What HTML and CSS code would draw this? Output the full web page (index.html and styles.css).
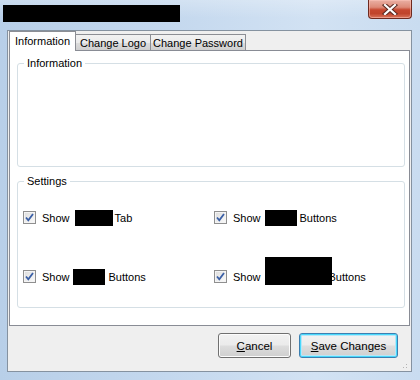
FILE: index.html
```html
<!DOCTYPE html>
<html>
<head>
<meta charset="utf-8">
<link rel="stylesheet" href="styles.css">
</head>
<body>
<div class="window">
  <div class="titlebar">
    <span class="title-redact"></span>
    <span class="close-btn">
      <svg width="18" height="11" viewBox="0 0 18 11">
        <path d="M4 1 L14 10 M14 1 L4 10" stroke="#5a2a22" stroke-width="4.2" stroke-linecap="square"/>
        <path d="M4 1 L14 10 M14 1 L4 10" stroke="#ffffff" stroke-width="2.2" stroke-linecap="square"/>
      </svg>
    </span>
  </div>
  <div class="client">
    <div class="tabs">
      <span class="tab tab-active">Information</span>
      <span class="tab tab-logo">Change Logo</span>
      <span class="tab tab-pass">Change Password</span>
    </div>
    <div class="panel">
      <fieldset class="group group-info">
        <legend>Information</legend>
        <div class="info-body"></div>
      </fieldset>
      <fieldset class="group group-settings">
        <legend>Settings</legend>
        <div class="settings-grid">
          <div class="opt">
            <span class="check"><svg width="11" height="11" viewBox="0 0 11 11"><path d="M2 5.5 L4.3 8.3 L9 2" fill="none" stroke="#3a5fa6" stroke-width="1.8"/></svg></span>
            <span class="lbl">Show</span><span class="redact r1"></span><span class="lbl">Tab</span>
          </div>
          <div class="opt">
            <span class="check"><svg width="11" height="11" viewBox="0 0 11 11"><path d="M2 5.5 L4.3 8.3 L9 2" fill="none" stroke="#3a5fa6" stroke-width="1.8"/></svg></span>
            <span class="lbl">Show</span><span class="redact r2"></span><span class="lbl">Buttons</span>
          </div>
          <div class="opt">
            <span class="check"><svg width="11" height="11" viewBox="0 0 11 11"><path d="M2 5.5 L4.3 8.3 L9 2" fill="none" stroke="#3a5fa6" stroke-width="1.8"/></svg></span>
            <span class="lbl">Show</span><span class="redact r3"></span><span class="lbl">Buttons</span>
          </div>
          <div class="opt">
            <span class="check"><svg width="11" height="11" viewBox="0 0 11 11"><path d="M2 5.5 L4.3 8.3 L9 2" fill="none" stroke="#3a5fa6" stroke-width="1.8"/></svg></span>
            <span class="lbl">Show</span><span class="redact r4"></span><span class="lbl">Buttons</span>
          </div>
        </div>
      </fieldset>
    </div>
    <div class="footer">
      <button class="btn btn-cancel"><u>C</u>ancel</button>
      <button class="btn btn-save"><u>S</u>ave Changes</button>
      <span class="grip"></span>
    </div>
  </div>
</div>
</body>
</html>
```

FILE: styles.css
```css
html, body {
  margin: 0;
  padding: 0;
  background: #ffffff;
}
body {
  font-family: "Liberation Sans", Arial, sans-serif;
  font-size: 11px;
  color: #000;
}
.window {
  width: 420px;
  height: 380px;
  box-sizing: border-box;
  padding: 0 8px 8px 7px;
  background: linear-gradient(90deg, #b8cfe8 0%, #c4d8ee 40%, #d2e2f3 75%, #c9dcf0 100%);
  display: flex;
  flex-direction: column;
  overflow: hidden;
}
.titlebar {
  height: 30px;
  display: flex;
  align-items: flex-start;
  margin: 0 -8px 0 -7px;
  background: linear-gradient(180deg, rgba(255,255,255,0.25), rgba(255,255,255,0) 60%);
}
.title-redact {
  width: 177px;
  height: 17px;
  background: #000;
  margin: 5px 0 0 3px;
}
.close-btn {
  margin-left: auto;
  margin-right: 8px;
  width: 44px;
  height: 19px;
  box-sizing: border-box;
  border: 1px solid #6e2a1f;
  border-top: none;
  border-radius: 0 0 4px 4px;
  background: linear-gradient(180deg, #eab0a4 0%, #dd8a78 40%, #c6472f 55%, #c0442b 75%, #d9745a 100%);
  display: flex;
  align-items: center;
  justify-content: center;
  box-shadow: inset 0 0 0 1px rgba(255,200,190,0.5);
}
.client {
  width: 405px;
  height: 342px;
  box-sizing: border-box;
  border: 1px solid #8592a0;
  background: #efefef;
  display: flex;
  flex-direction: column;
  padding: 0 1px 0 1px;
}
.tabs {
  display: flex;
  align-items: flex-end;
  height: 19px;
  position: relative;
  z-index: 1;
}
.tab {
  box-sizing: border-box;
  height: 16px;
  border: 1px solid #8c8e94;
  border-bottom: none;
  margin-left: -1px;
  background: linear-gradient(180deg, #f2f2f2 0%, #ebebeb 50%, #dddddd 51%, #cfcfcf 100%);
  display: flex;
  align-items: center;
  justify-content: center;
  line-height: 14px;
  white-space: nowrap;
}
.tab-active {
  margin-left: 0;
  height: 20px;
  width: 67px;
  background: #ffffff;
  margin-bottom: -1px;
  padding-bottom: 1px;
  z-index: 2;
}
.tab-logo {
  width: 76px;
}
.tab-pass {
  width: 96px;
}
.panel {
  height: 276px;
  box-sizing: border-box;
  border: 1px solid #898c95;
  background: #ffffff;
  padding: 0 4px 0 7px;
  display: flex;
  flex-direction: column;
}
.group {
  margin: 0;
  padding: 0;
  border: 1px solid #d5dfe5;
  border-radius: 3px;
  min-width: 0;
}
.group legend {
  margin-left: 6px;
  padding: 0 3px;
  line-height: 14px;
}
.group-info {
  margin-top: 5px;
}
.info-body {
  height: 96px;
}
.group-settings {
  margin-top: 7px;
}
.settings-grid {
  display: grid;
  grid-template-columns: 191px 1fr;
  grid-auto-rows: 17px;
  row-gap: 42px;
  padding: 21px 0 22px 5px;
}
.opt {
  display: flex;
  align-items: center;
  white-space: nowrap;
}
.check {
  width: 13px;
  height: 13px;
  box-sizing: border-box;
  border: 1px solid #8f8f8f;
  background: linear-gradient(135deg, #dcdcdc, #fbfbfb);
  display: flex;
  align-items: center;
  justify-content: center;
  margin-right: 6px;
  box-shadow: inset 0 0 0 1px #f4f4f4;
}
.redact {
  display: inline-block;
  background: #000;
  height: 16px;
}
.r1 { width: 38px; margin: 0 2px 0 5px; }
.r2 { width: 32px; margin: 0 3px 0 4px; }
.r3 { width: 32px; margin: 0 4px 0 3px; }
.r4 { width: 67px; height: 28px; margin: -12px -3px 0 4px; position: relative; z-index: 1; }
.footer {
  flex: 1;
  display: flex;
  align-items: flex-start;
  justify-content: flex-end;
  gap: 8px;
  padding: 7px 12px 0 0;
  position: relative;
}
.btn {
  font-family: inherit;
  font-size: 11.5px;
  height: 25px;
  box-sizing: border-box;
  border: 1px solid #707070;
  border-radius: 3px;
  background: linear-gradient(180deg, #f2f2f2 0%, #ebebeb 48%, #dddddd 52%, #cfcfcf 100%);
  color: #000;
  padding: 0;
  box-shadow: inset 0 0 0 1px #fcfcfc;
}
.btn u { text-decoration: underline; }
.btn-cancel { width: 73px; }
.btn-save {
  width: 99px;
  border-color: #3c7fb1;
  box-shadow: inset 0 0 0 1px #48d8fb, inset 0 0 0 2px #b7e6f8;
}
.grip {
  position: absolute;
  right: 1px;
  bottom: 1px;
  width: 10px;
  height: 10px;
  background-image: radial-gradient(circle, #b4b4b4 0.8px, transparent 1px);
  background-size: 3px 3px;
  clip-path: polygon(100% 0, 100% 100%, 0 100%);
}
```
